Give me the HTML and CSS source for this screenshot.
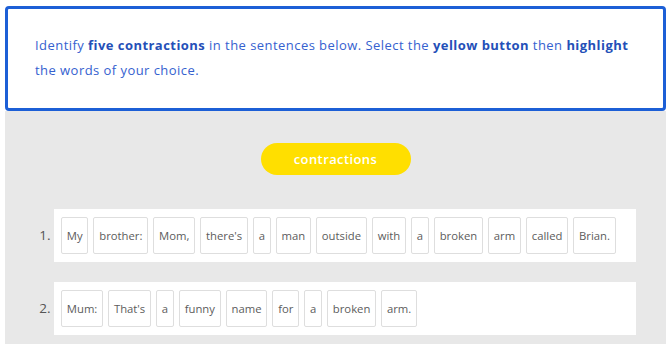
FILE: index.html
```html
<!DOCTYPE html>
<html lang="en">

<head>
    <meta charset="UTF-8">
    <meta name="viewport" content="width=device-width, initial-scale=1.0">
    <title>contractions</title>
    <link rel="stylesheet" href="styles.css">
</head>

<body>
    <div class="page">
        <div class="intro">
            <p>Identify <b>five contractions</b> in the sentences below. Select the <b>yellow button</b> then <b>highlight</b> the words of your choice.</p>
        </div>

        <div class="activity">
            <div class="tools">
                <button class="btncontr">contractions</button>
            </div>

            <ol class="sentences">
                <li>
                    <div class="card">
                        <span class="word">My</span>
                        <span class="word">brother:</span>
                        <span class="word">Mom,</span>
                        <span class="word">there's</span>
                        <span class="word">a</span>
                        <span class="word">man</span>
                        <span class="word">outside</span>
                        <span class="word">with</span>
                        <span class="word">a</span>
                        <span class="word">broken</span>
                        <span class="word">arm</span>
                        <span class="word">called</span>
                        <span class="word">Brian.</span>
                    </div>
                </li>
                <li>
                    <div class="card">
                        <span class="word">Mum:</span>
                        <span class="word">That's</span>
                        <span class="word">a</span>
                        <span class="word">funny</span>
                        <span class="word">name</span>
                        <span class="word">for</span>
                        <span class="word">a</span>
                        <span class="word">broken</span>
                        <span class="word">arm.</span>
                    </div>
                </li>
            </ol>
        </div>
    </div>
</body>

</html>
```

FILE: styles.css
```css
body {
    margin: 0;
    background-color: #fff;
    font-family: "Open Sans", "Liberation Sans", sans-serif;
}

.page {
    margin: 6px 6px 0 5px;
}

/* instructions box */
.intro {
    border: 3px solid #1c5fd6;
    border-radius: 4px;
    background-color: #fff;
    padding: 24px 20px 25px 27px;
}

.intro p {
    margin: 0;
    color: #3561cf;
    font-size: 13px;
    line-height: 25px;
    letter-spacing: 0.45px;
}

.intro b {
    color: #244fb8;
    font-weight: 700;
}

/* grey area */
.activity {
    background-color: #e8e8e8;
    padding: 32px 30px 1px 0;
}

.tools {
    display: flex;
    justify-content: center;
    padding-left: 30px;
}

.btncontr {
    width: 150px;
    height: 32px;
    border: none;
    border-radius: 16px;
    background-color: #ffdf00;
    color: #fff;
    font-family: inherit;
    font-size: 13px;
    font-weight: 600;
    letter-spacing: 0.4px;
    cursor: pointer;
}

.sentences {
    margin: 34px 0 0 0;
    padding-left: 49px;
    color: #555;
    font-size: 12px;
}

.sentences li {
    margin-bottom: 20px;
}

.sentences li::marker {
    font-size: 13.5px;
}

.card {
    display: flex;
    align-items: center;
    gap: 5px;
    background-color: #fff;
    padding: 8px 7px;
}

.word {
    display: inline-block;
    height: 35px;
    line-height: 35px;
    padding: 0 4.8px;
    border: 1px solid #dedede;
    border-radius: 2px;
    color: #5c5c5c;
    font-size: 11.3px;
}
```
